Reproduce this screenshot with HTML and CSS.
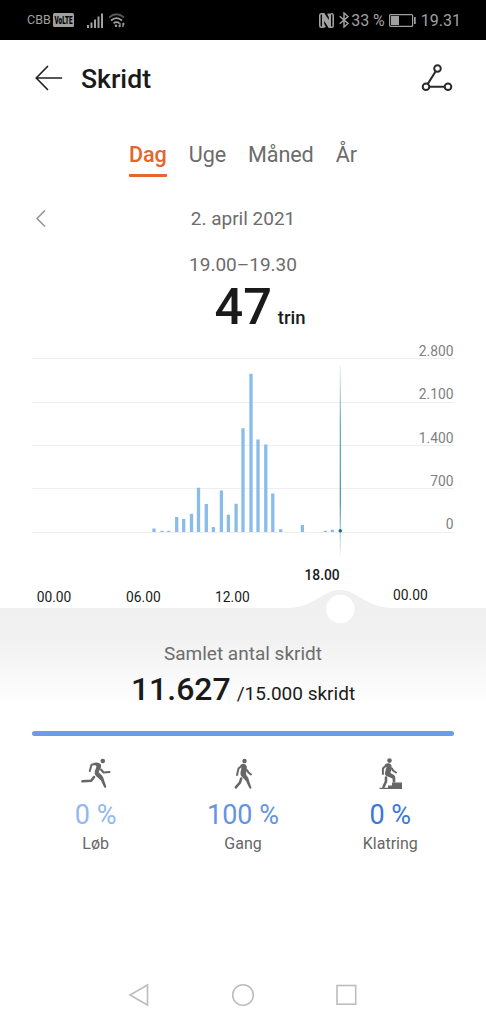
FILE: index.html
```html
<!DOCTYPE html>
<html lang="da">
<head>
    <meta charset="UTF-8">
    <meta name="viewport" content="width=device-width, initial-scale=1.0">
    <title>Skridt</title>
    <link rel="stylesheet" href="styles.css">
</head>
<body>
    <!-- Status bar -->
    <div class="status-bar">
        <span class="carrier">CBB</span>
        <svg class="volte" width="21" height="14" viewBox="0 0 21 14">
            <rect width="21" height="14" rx="1.500" fill="#a0a0a0"/>
            <text x="1.500" y="10.600" textLength="18" lengthAdjust="spacingAndGlyphs">VoLTE</text>
        </svg>
        <svg class="signal" width="16" height="15" viewBox="0 0 16 15" fill="#a0a0a0">
            <rect x="0" y="12" width="2" height="3"/>
            <rect x="3.500" y="9.500" width="2" height="5.500"/>
            <rect x="7" y="6.500" width="2" height="8.500"/>
            <rect x="10.500" y="3.500" width="2" height="11.500"/>
            <rect x="14" y="0.500" width="2" height="14.500"/>
        </svg>
        <svg class="wifi" width="18" height="15" viewBox="0 0 18 15" fill="none" stroke="#a0a0a0" stroke-width="1.700">
            <path d="M1 4.500Q8.500 -2 16 4.500" stroke="#555"/>
            <path d="M3 7.500Q8.500 2.800 14 7.500"/>
            <path d="M5.500 10.300Q8.500 7.800 11.500 10.300"/>
            <circle cx="8" cy="12.800" r="1.300" fill="#a0a0a0" stroke="none"/>
            <path d="M12 10v4M10.700 12.500L12 14M15 14v-4M16.300 11.500L15 10" stroke-width="1.300"/>
        </svg>
        <div class="status-right">
            <svg width="15" height="15" viewBox="0 0 15 15">
                <path d="M3 .8H2Q.8 .8 .8 2.500V12.500Q.8 14.200 2 14.200H3M12 .8H13Q14.200 .8 14.200 2.500V12.500Q14.200 14.200 13 14.200H12" fill="none" stroke="#a0a0a0" stroke-width="1.600"/>
                <path d="M3 15V0L5.300 0L9.800 7V4L8.500 2V.5H12V15H9.700L5.200 8V11L6.500 13V14.500z" fill="#a0a0a0"/>
            </svg>
            <svg class="bluetooth" width="10" height="16" viewBox="0 0 10 16" fill="none" stroke="#a0a0a0" stroke-width="1.500">
                <path d="M.7 4.300L9 11.500L5 15V1l4 3.500L.7 11.700"/>
            </svg>
            <span class="percent">33 %</span>
            <svg class="battery" width="27" height="13" viewBox="0 0 27 13">
                <rect x=".6" y=".6" width="23" height="11.800" rx="1" fill="none" stroke="#a0a0a0" stroke-width="1.200"/>
                <rect x="2" y="2" width="8" height="9" fill="#a0a0a0"/>
                <rect x="25" y="3" width="1.700" height="7" fill="#a0a0a0"/>
            </svg>
            <span class="clock">19.31</span>
        </div>
    </div>

    <!-- Header -->
    <header class="header">
        <svg class="back" width="28" height="26" viewBox="0 0 28 26" fill="none" stroke="#222" stroke-width="1.700" stroke-linecap="round" stroke-linejoin="round">
            <path d="M12.500 1.500L1.200 13L12.500 24.500M1.200 13H26.500"/>
        </svg>
        <h1>Skridt</h1>
        <svg class="route" width="32" height="28" viewBox="0 0 32 28" fill="none" stroke="#2a2a2a" stroke-width="2">
            <circle cx="16.500" cy="4.500" r="3.300"/>
            <circle cx="5" cy="22.700" r="3.300"/>
            <circle cx="27" cy="22.700" r="3.300"/>
            <path d="M14.700 7.300L6.800 19.900M8.300 22.700H23.700"/>
        </svg>
    </header>

    <nav class="tabs">
        <a class="tab active">Dag</a>
        <a class="tab">Uge</a>
        <a class="tab">Måned</a>
        <a class="tab">År</a>
    </nav>

    <div class="date-row">
        <svg class="prev" width="11" height="18" viewBox="0 0 11 18" fill="none" stroke="#999" stroke-width="1.700">
            <path d="M10 .5L2 8.500L10 16.500"/>
        </svg>
        <span class="date">2. april 2021</span>
    </div>

    <div class="interval">19.00–19.30</div>
    <div class="current"><span class="count">47</span><span class="unit">trin</span></div>

    <!-- Steps per half hour -->
    <svg class="chart" width="486" height="268" viewBox="0 340 486 268">
        <defs>
            <linearGradient id="cursor" x1="0" y1="0" x2="0" y2="1">
                <stop offset="0" stop-color="#4a9cb8" stop-opacity="0.1"/>
                <stop offset="0.3" stop-color="#4a9cb8" stop-opacity="0.8"/>
                <stop offset="0.7" stop-color="#4a9cb8"/>
                <stop offset="0.85" stop-color="#4a9cb8" stop-opacity="0.5"/>
                <stop offset="1" stop-color="#4a9cb8" stop-opacity="0"/>
            </linearGradient>
        </defs>
        <g class="grid">
            <path d="M32 358.500H454M32 402.500H454M32 445.500H454M32 488.500H454M32 532.500H454"/>
        </g>
        <g class="bars">
            <path d="M154 532V528.500M162 532V530.800M168.800 532V530.800M176.700 532V517M183.700 532V519M191.500 532V513.700M198.500 532V487.700M206.300 532V504M213.400 532V527M221.400 532V490.500M228.400 532V514.700M236.100 532V503.700M243 532V428.300M251 532V373.700M258 532V439.500M265.800 532V444.500M272.800 532V493.500M280.700 532V529.300M302.400 532V525M325.400 532V530.800M332.300 532V529.800"/>
        </g>
        <rect x="339.700" y="366" width="1.300" height="193" fill="url(#cursor)"/>
        <circle cx="340.300" cy="530.800" r="1.800" fill="#16748f"/>
        <g class="y-labels">
            <text x="453.500" y="356.300">2.800</text>
            <text x="453.500" y="399.400">2.100</text>
            <text x="453.500" y="442.500">1.400</text>
            <text x="453.500" y="485.800">700</text>
            <text x="453.500" y="529">0</text>
        </g>
        <g class="x-labels">
            <text x="36.700" y="602">00.00</text>
            <text x="126" y="602">06.00</text>
            <text x="215" y="602">12.00</text>
            <text class="selected" x="304.500" y="580">18.00</text>
            <text x="393" y="600">00.00</text>
        </g>
        <path d="M288 608C316 607 322 590 340 590S364 607 392 608z" fill="#f0f0f0"/>
        <circle cx="340.300" cy="609" r="14.300" fill="#fff"/>
    </svg>

    <!-- Daily total -->
    <section class="summary">
        <div class="summary-title">Samlet antal skridt</div>
        <div class="total"><span class="total-count">11.627</span><span class="goal">/15.000 skridt</span></div>
        <div class="progress"></div>
    </section>

    <section class="activities">
        <div class="activity run">
            <svg width="32" height="32" viewBox="0 0 32 32">
                <circle cx="22.800" cy="3" r="2.300"/>
                <path d="M13 5Q17 4 20 5.500Q22 7.500 20.500 10.500L18.500 14L22 17.500Q23.500 19 24 22L26.300 28.500Q25.500 31 24 29L21 22.500L16 18Q14 16.500 14.800 13.500L16.500 8.500z"/>
                <path class="limb" d="M15.500 6L11.500 6.700L9.800 13M21 11.500L23.500 14.500L29.500 14"/>
                <path class="leg" d="M14 19L11.200 22.700L2.500 23.300"/>
            </svg>
            <div class="value">0 %</div>
            <div class="label">Løb</div>
        </div>
        <div class="activity walk">
            <svg width="32" height="32" viewBox="0 0 32 32">
                <circle cx="17.500" cy="3" r="2.200"/>
                <path d="M13.500 7Q16 5 18.500 6.500Q20.500 8 19.800 11L19 16.500Q21.500 19.500 22 22.500L24.500 30Q23.500 31.500 22.300 30L19 23L14.700 18.500Q13 17 13.500 14.500L14.500 9.500z"/>
                <path class="limb" d="M14.500 8L11.500 10.500L10 17M20 12L21.500 14.500L24 16.500"/>
                <path class="leg" d="M14.200 20.500L13 24.500L8.800 29.300"/>
            </svg>
            <div class="value">100 %</div>
            <div class="label">Gang</div>
        </div>
        <div class="activity climb">
            <svg width="32" height="32" viewBox="0 0 32 32">
                <circle cx="15.500" cy="2.600" r="2.300"/>
                <path d="M10.800 6.500Q14 4.500 16.500 6Q18.500 8 17.500 11L16.500 15L20 17Q21.500 18 21.300 20V24.500H18.800L18.500 20.500L12.500 18Q10.500 17 11 14.500L12.500 9z"/>
                <path class="limb" d="M12 7.500L8.900 10.500L8.900 16M18 10.500L19 12.500L22 14.500"/>
                <path class="leg" d="M12 19.500L12 23.500L9.500 29"/>
                <path d="M5.500 29.800H14V27.500H18V24.500H28V31H5.500z"/>
            </svg>
            <div class="value">0 %</div>
            <div class="label">Klatring</div>
        </div>
    </section>

    <!-- System navigation -->
    <div class="nav-bar">
        <svg width="22" height="24" viewBox="0 0 22 24"><path d="M19.500 2V22L2 12z"/></svg>
        <svg width="24" height="24" viewBox="0 0 24 24"><circle cx="12" cy="12" r="10.300"/></svg>
        <svg width="22" height="24" viewBox="0 0 22 24"><rect x="1" y="2.500" width="18.700" height="18.700"/></svg>
    </div>
</body>
</html>
```

FILE: styles.css
```css
body {
    margin: 0;
    width: 486px;
    height: 1024px;
    overflow: hidden;
    display: flex;
    flex-direction: column;
    background-color: #fff;
    font-family: Roboto, "Noto Sans", sans-serif;
    color: #1a1a1a;
}
svg {
    display: block;
    flex-shrink: 0;
}
.status-bar {
    display: flex;
    align-items: center;
    height: 40px;
    padding: 0 25px 0 27px;
    background-color: #000;
    color: #a0a0a0;
    white-space: nowrap;
}
.carrier {
    font-size: 12.5px;
    line-height: 40px;
    width: 26px;
}
.volte {
    overflow: visible;
}
.volte text {
    font-size: 10px;
    font-weight: 900;
    fill: #000;
}
.signal {
    margin-left: 13px;
}
.wifi {
    margin-left: 5px;
}
.status-right {
    display: flex;
    align-items: center;
    margin-left: auto;
}
.bluetooth {
    margin-left: 5px;
}
.percent {
    margin-left: 2px;
    font-size: 16px;
}
.battery {
    margin-left: 4px;
}
.clock {
    margin-left: 5px;
    font-size: 16px;
}
.header {
    display: flex;
    align-items: center;
    height: 78px;
    padding: 0 33px 0 35px;
}
.header h1 {
    margin: 0 0 0 18px;
    font-size: 26.6px;
    font-weight: 500;
    line-height: 32px;
}
.back {
    margin-bottom: 2px;
}
.route {
    margin-left: auto;
    margin-bottom: 2px;
}
.tabs {
    display: flex;
    justify-content: center;
    gap: 22px;
    height: 77px;
    padding-top: 22px;
    box-sizing: border-box;
}
.tab {
    height: 34px;
    font-size: 21.6px;
    line-height: 29px;
    letter-spacing: -0.1px;
    color: #6c6c6c;
}
.tab.active {
    color: #e5652a;
    font-weight: 500;
    border-bottom: 3px solid #e5652a;
    border-radius: 1px;
}
.date-row {
    display: flex;
    align-items: center;
    height: 47px;
    padding: 0 35px;
}
.date {
    flex: 1;
    margin-right: 11px;
    text-align: center;
    font-size: 19px;
    color: #6c6c6c;
}
.interval {
    height: 34px;
    line-height: 46px;
    text-align: center;
    font-size: 19px;
    color: #6c6c6c;
}
.current {
    display: flex;
    justify-content: center;
    align-items: baseline;
    height: 64px;
    padding-left: 34px;
    line-height: 62px;
}
.count {
    font-size: 50.5px;
    font-weight: 500;
}
.unit {
    margin-left: 6px;
    font-size: 18.5px;
    font-weight: 500;
}
.chart {
    position: relative;
    overflow: visible;
}
.grid path {
    stroke: #eee;
    stroke-width: 1;
}
.bars path {
    stroke: #8abcea;
    stroke-width: 3.3;
}
.y-labels {
    font-size: 13.8px;
    fill: #808080;
    text-anchor: end;
}
.x-labels {
    font-size: 13.8px;
    fill: #1a1a1a;
}
.selected {
    font-weight: 500;
}
.summary {
    height: 128px;
    padding: 32px 32px 0;
    box-sizing: border-box;
    background: linear-gradient(#f0f0f0 0, #f1f1f1 30px, #fff 100px);
}
.summary-title {
    text-align: center;
    font-size: 19px;
    line-height: 28px;
    color: #6c6c6c;
}
.total {
    display: flex;
    justify-content: center;
    align-items: baseline;
    height: 63px;
    line-height: 42px;
}
.total-count {
    font-size: 32px;
    font-weight: 500;
}
.goal {
    margin-left: 6px;
    font-size: 19px;
}
.progress {
    height: 5px;
    border-radius: 3px;
    background-color: #6a9de8;
}
.activities {
    display: grid;
    grid-template-columns: repeat(3, 1fr);
    padding: 22px 22px 0;
}
.activity {
    display: flex;
    flex-direction: column;
    align-items: center;
}
.activity svg {
    fill: #666;
}
.activity .limb,
.activity .leg {
    fill: none;
    stroke: #666;
    stroke-width: 2;
    stroke-linecap: round;
    stroke-linejoin: round;
}
.activity .leg {
    stroke-width: 2.6;
}
.value {
    margin-top: 9px;
    font-size: 27px;
    line-height: 33px;
}
.run .value {
    color: #93b8ee;
}
.walk .value {
    color: #6493e6;
}
.climb .value {
    color: #3b76de;
}
.label {
    font-size: 16px;
    line-height: 24px;
    color: #666;
}
.nav-bar {
    display: flex;
    justify-content: center;
    gap: 81px;
    margin-top: auto;
    height: 41px;
}
.nav-bar svg {
    fill: none;
    stroke: #bdbdbd;
    stroke-width: 1.6;
}
```
